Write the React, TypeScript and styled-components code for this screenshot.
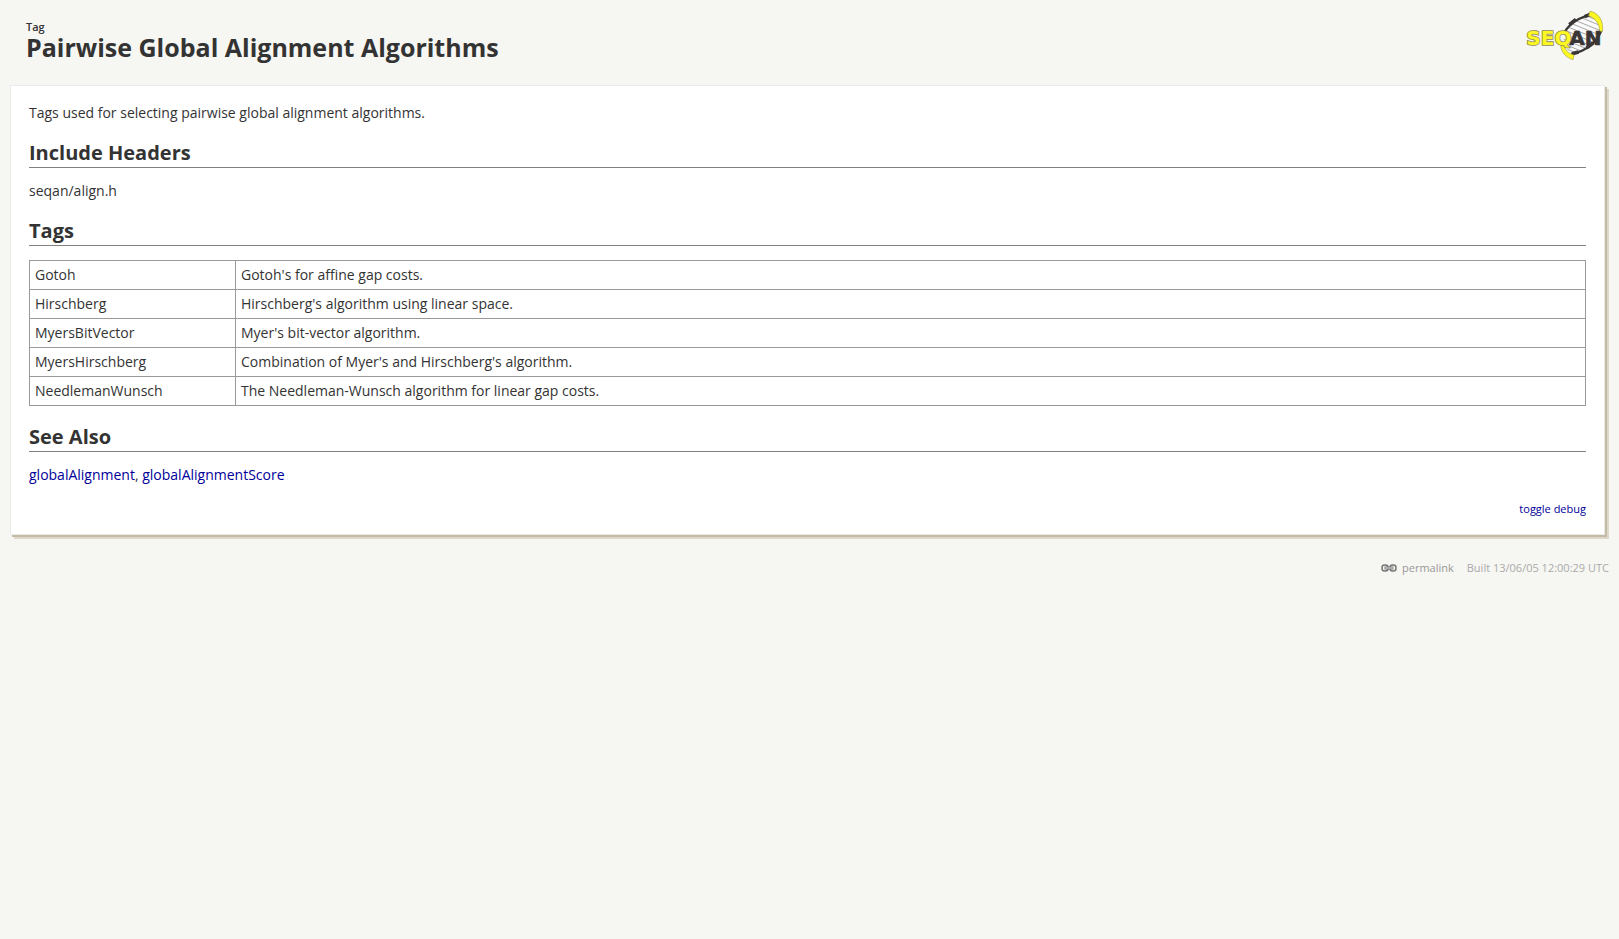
import React from 'react';
import styled, { createGlobalStyle } from 'styled-components';

const GlobalStyle = createGlobalStyle`
  body {
    margin: 0;
    background: #f6f6f2;
    color: #333;
    font: 14px/18px 'Open Sans', 'Noto Sans', sans-serif;
  }
`;

const Page = styled.div`
  padding: 0 10px;
`;

const Header = styled.header`
  display: flex;
  justify-content: space-between;
  align-items: flex-start;
  padding: 10px 5px 24px 16px;
`;

const Heading = styled.div`
  padding-top: 11px;
`;

const Kind = styled.div`
  font-size: 11px;
  font-weight: 600;
  line-height: 12px;
`;

const Title = styled.h1`
  margin: 0;
  font-size: 25px;
  font-weight: 700;
  line-height: 28px;
`;

const LogoImage = styled.svg`
  display: block;
  flex: none;
`;

const Card = styled.main`
  margin-right: 4px;
  padding: 18px 18px 17px;
  background: #fff;
  border: 1px solid #ebebeb;
  box-shadow: 2px 2px 0 #c4bba5, 4px 4px 0 #ded8ca;
`;

const SectionTitle = styled.h2`
  margin: 19px 0 14px;
  padding-bottom: 2px;
  border-bottom: 1px solid #808080;
  font-size: 20px;
  font-weight: 700;
  line-height: 24px;
`;

const Text = styled.p`
  margin: 0;
`;

const TagTable = styled.table`
  width: 100%;
  border-collapse: collapse;
`;

const Cell = styled.td<{ $name?: boolean }>`
  width: ${({ $name }) => ($name ? '195px' : 'auto')};
  padding: 5px;
  border: 1px solid #999;
`;

const Link = styled.a`
  color: #009;
  text-decoration: none;
`;

const DebugBar = styled.div`
  display: flex;
  justify-content: flex-end;
  margin-top: 17px;
  font-size: 11px;
  line-height: 16px;
`;

const Footer = styled.footer`
  display: flex;
  justify-content: flex-end;
  gap: 13px;
  margin-top: 25px;
  color: #aaa;
  font-size: 11px;
  line-height: 16px;
`;

const Permalink = styled.a`
  display: flex;
  align-items: center;
  gap: 5px;
  color: #999;
  text-decoration: none;
`;

const tags = [
  ['Gotoh', "Gotoh's for affine gap costs."],
  ['Hirschberg', "Hirschberg's algorithm using linear space."],
  ['MyersBitVector', "Myer's bit-vector algorithm."],
  ['MyersHirschberg', "Combination of Myer's and Hirschberg's algorithm."],
  ['NeedlemanWunsch', 'The Needleman-Wunsch algorithm for linear gap costs.'],
];

function Logo() {
  return (
    <LogoImage width="78" height="50" viewBox="0 0 234 150" role="img" aria-label="SeqAn">
      <path d="M112 78C124 44 154 22 198 14L226 44C224 84 194 118 140 132Q112 118 112 78Z" fill="#fafafa" />
      <g stroke="#a8a8a8" strokeWidth="3">
        <path d="M186 19L220 34M168 24L224 47M152 33L224 62M140 42L218 74M128 52L212 86M120 62L204 98M115 74L196 108M113 88L182 116M116 103L168 124M124 118L152 129" />
      </g>
      <g fill="none" stroke="#3a3636">
        <path d="M116 66C130 42 156 23 198 13" strokeWidth="7" />
        <path d="M136 132C182 124 214 94 226 62" strokeWidth="7" />
        <path d="M130 44L150 28M176 20L200 10M138 131L158 126M182 113L202 98" strokeWidth="11" />
      </g>
      <g stroke="#a6a13c" strokeWidth="2" fill="#fdf821">
        <path d="M192 4C218 8 234 34 229 64L221 64C221 42 210 26 188 17Z" />
        <path d="M113 104C117 122 130 132 144 135L141 149C118 142 106 126 104 106Z" />
      </g>
      <g fontFamily="'DejaVu Sans', sans-serif" fontSize="60" fontWeight="700">
        <text x="130" y="106" fill="#3a3636" stroke="#3a3636" strokeWidth="2">AN</text>
        <text x="1" y="106" fill="#fdf821" stroke="#8f8b50" strokeWidth="5" paintOrder="stroke">SEQ</text>
      </g>
    </LogoImage>
  );
}

function ChainIcon() {
  return (
    <svg width="16" height="8" viewBox="0 0 16 8" fill="none" aria-hidden="true">
      <rect x="1" y="1" width="6" height="6" rx="2.5" stroke="#777" strokeWidth="1.5" />
      <rect x="9" y="1" width="6" height="6" rx="2.5" stroke="#777" strokeWidth="1.5" />
      <path d="M3.5 4H12.5" stroke="#777" strokeWidth="3" />
      <path d="M4 4H12" stroke="#e4e4e0" strokeWidth="1" />
    </svg>
  );
}

export default function App() {
  return (
    <>
      <GlobalStyle />
      <Page>
        <Header>
          <Heading>
            <Kind>Tag</Kind>
            <Title>Pairwise Global Alignment Algorithms</Title>
          </Heading>
          <Logo />
        </Header>
        <Card>
          <Text>Tags used for selecting pairwise global alignment algorithms.</Text>
          <SectionTitle>Include Headers</SectionTitle>
          <Text>seqan/align.h</Text>
          <SectionTitle>Tags</SectionTitle>
          <TagTable>
            <tbody>
              {tags.map(([name, description]) => (
                <tr key={name}>
                  <Cell $name>{name}</Cell>
                  <Cell>{description}</Cell>
                </tr>
              ))}
            </tbody>
          </TagTable>
          <SectionTitle>See Also</SectionTitle>
          <Text>
            <Link href="#globalAlignment">globalAlignment</Link>,{' '}
            <Link href="#globalAlignmentScore">globalAlignmentScore</Link>
          </Text>
          <DebugBar>
            <Link href="#debug">toggle debug</Link>
          </DebugBar>
        </Card>
        <Footer>
          <Permalink href="#permalink">
            <ChainIcon />
            permalink
          </Permalink>
          <span>Built 13/06/05 12:00:29 UTC</span>
        </Footer>
      </Page>
    </>
  );
}
